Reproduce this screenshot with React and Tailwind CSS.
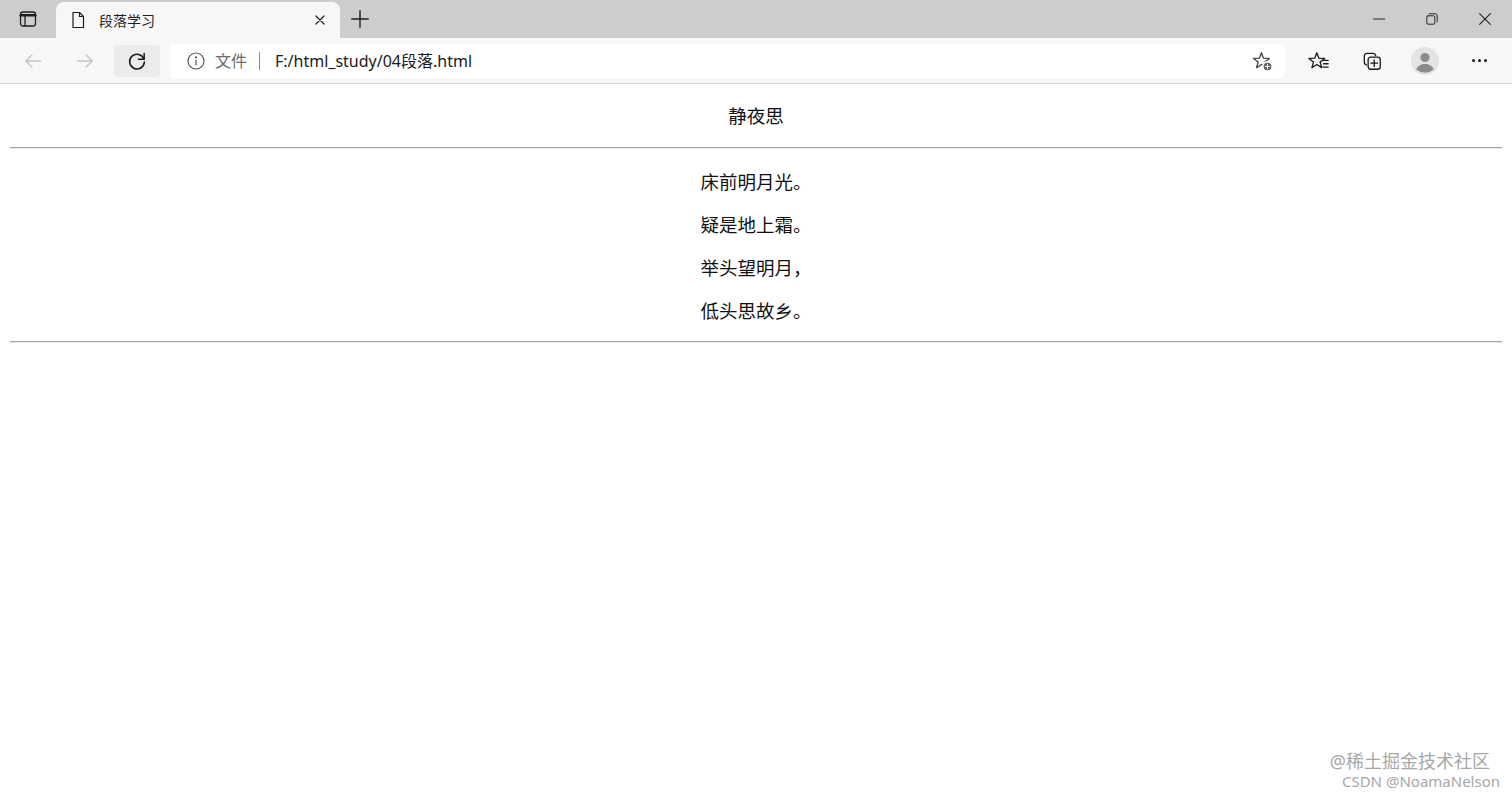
import React from 'react'

const font = { fontFamily: '"Noto Sans", "Noto Sans CJK SC", sans-serif' }

const Ico = ({ children, className = '', size = 20 }) => (
    <svg width={size} height={size} viewBox="0 0 20 20" fill="none" stroke="currentColor" strokeWidth="1.2" strokeLinecap="round" strokeLinejoin="round" className={className}>
        {children}
    </svg>
)

const star = 'M9.5 2.5L11.38 7.41L16.63 7.68L12.54 10.99L13.91 16.07L9.5 13.2L5.09 16.07L6.46 10.99L2.37 7.68L7.62 7.41Z'

const TabStrip = () => (
    <div className="h-[38px] bg-[#cdcdcd] flex items-end relative">
        <div className="w-[56px] h-[38px] flex items-center justify-center text-[#1f1f1f]">
            <Ico size={20}>
                <rect x="2.5" y="3" width="15" height="14" rx="2.5" strokeWidth="1.3" />
                <path d="M2.8 6.2h14.4" strokeWidth="2.6" />
                <path d="M7 6.5v10.3" strokeWidth="1.3" />
            </Ico>
        </div>
        <div className="w-[284px] h-[36px] bg-[#f7f7f7] rounded-t-[8px] flex items-center pl-[12px] pr-[12px]">
            <Ico size={20} className="text-[#1f1f1f]">
                <path d="M5 2.5h6.5l4 4v11h-10.5z" />
                <path d="M11.5 2.5v4h4" />
            </Ico>
            <span className="ml-[11px] text-[14px] text-[#1f1f1f] flex-1">段落学习</span>
            <Ico size={16} className="text-[#1f1f1f]">
                <path d="M5 5l10 10M15 5L5 15" strokeWidth="1.5" />
            </Ico>
        </div>
        <div className="w-[40px] h-[38px] flex items-center justify-center text-[#1f1f1f]">
            <Ico size={22}>
                <path d="M10 2.5v15M2.5 10h15" strokeWidth="1.3" />
            </Ico>
        </div>
        <div className="flex-1" />
        <div className="flex h-[38px] text-[#1f1f1f]">
            <div className="w-[53px] flex items-center justify-center">
                <Ico size={16}><path d="M3 10h14" /></Ico>
            </div>
            <div className="w-[53px] flex items-center justify-center">
                <Ico size={16}>
                    <rect x="3.5" y="6" width="10" height="10.5" rx="1.5" />
                    <path d="M6.5 3.5h7.5a2.5 2.5 0 0 1 2.5 2.5v7.5" />
                </Ico>
            </div>
            <div className="w-[54px] flex items-center justify-center">
                <Ico size={18}><path d="M4 4l12 12M16 4L4 16" /></Ico>
            </div>
        </div>
    </div>
)

const Toolbar = () => (
    <div className="h-[46px] bg-[#f7f7f7] border-b border-[#d2d2d2] flex items-center pl-[10px] pr-[8px]">
        <div className="w-[46px] h-[32px] flex items-center justify-center text-[#c4c4c4]">
            <Ico size={22}><path d="M17 10H3.5M9 4.5L3.5 10 9 15.5" /></Ico>
        </div>
        <div className="w-[6px]" />
        <div className="w-[46px] h-[32px] flex items-center justify-center text-[#c4c4c4]">
            <Ico size={22}><path d="M3 10h13.5M11 4.5l5.5 5.5-5.5 5.5" /></Ico>
        </div>
        <div className="w-[6px]" />
        <div className="w-[46px] h-[32px] rounded-[4px] bg-[#ebebeb] flex items-center justify-center text-[#1a1a1a]">
            <Ico size={22}>
                <path d="M16.3 8.2A6.7 6.7 0 1 0 16.7 11" strokeWidth="1.4" />
                <path d="M16.5 3.3v5.2h-5.2" strokeWidth="1.4" />
            </Ico>
        </div>
        <div className="w-[10px]" />
        <div className="flex-1 h-[34px] bg-white rounded-[4px] flex items-center pl-[16px] pr-[12px]">
            <Ico size={20} className="text-[#555]">
                <circle cx="10" cy="10" r="8" />
                <path d="M10 9v5" />
                <circle cx="10" cy="6.3" r="0.5" fill="currentColor" />
            </Ico>
            <span className="ml-[9px] text-[16px] text-[#6b6b6b]">文件</span>
            <span className="ml-[12px] w-px h-[18px] bg-[#8a8a8a]" />
            <span className="ml-[15px] text-[16px] text-[#1a1a1a]">F:/html_study/04段落.html</span>
            <div className="flex-1" />
            <Ico size={22} className="text-[#444]">
                <path d={star} />
                <circle cx="15" cy="15" r="4.2" fill="#5a5a5a" stroke="#fff" strokeWidth="1.4" />
                <path d="M15 13.1v3.8M13.1 15h3.8" stroke="#fff" strokeWidth="1.1" />
            </Ico>
        </div>
        <div className="w-[9px]" />
        <div className="w-[50px] h-[32px] flex items-center justify-center text-[#1a1a1a]">
            <Ico size={22}>
                <path d={star} transform="translate(-1.5 0)" />
                <path d="M13.8 9.5h4.5M14.2 12.5h4.1M13.8 15.5h4.5" />
            </Ico>
        </div>
        <div className="w-[3px]" />
        <div className="w-[50px] h-[32px] flex items-center justify-center text-[#1a1a1a]">
            <Ico size={22}>
                <path d="M5 13.5A2.5 2.5 0 0 1 3 11V5.5A2.5 2.5 0 0 1 5.5 3H11a2.5 2.5 0 0 1 2.4 2" />
                <rect x="6.5" y="6.5" width="11" height="11" rx="2.2" />
                <path d="M12 9v6M9 12h6" />
            </Ico>
        </div>
        <div className="w-[3px]" />
        <div className="w-[50px] h-[32px] flex items-center justify-center">
            <svg width="28" height="28" viewBox="0 0 28 28">
                <circle cx="14" cy="14" r="14" fill="#e3e3e3" />
                <circle cx="14" cy="10.5" r="4.6" fill="#8c8c8c" />
                <path d="M5.2 22.5c1.4-3.6 5-5.5 8.8-5.5s7.4 1.9 8.8 5.5A13.9 13.9 0 0 1 5.2 22.5z" fill="#8c8c8c" />
            </svg>
        </div>
        <div className="w-[4px]" />
        <div className="w-[50px] h-[32px] flex items-center justify-center gap-[3px]">
            <span className="w-[3px] h-[3px] rounded-full bg-[#1a1a1a]" />
            <span className="w-[3px] h-[3px] rounded-full bg-[#1a1a1a]" />
            <span className="w-[3px] h-[3px] rounded-full bg-[#1a1a1a]" />
        </div>
    </div>
)

const lines = ['床前明月光。', '疑是地上霜。', '举头望明月，', '低头思故乡。']

const Hr = () => <div className="mx-[10px] border-t border-[#a3a3a3] border-b border-b-[#ececec]" />

const App = () => {
    return (
        <div className="w-[1512px] h-[795px] bg-white overflow-hidden relative" style={font}>
            <TabStrip />
            <Toolbar />
            <div className="text-[18.5px] text-[#111]">
                <div className="h-[63px] flex items-center justify-center">静夜思</div>
                <Hr />
                <div className="pt-[11px]">
                    {lines.map(l => (
                        <div key={l} className="h-[43px] flex items-center justify-center">{l}</div>
                    ))}
                </div>
                <div className="mt-[9px]">
                    <Hr />
                </div>
            </div>
            <div className="absolute right-[12px] bottom-[4px] text-right leading-tight text-[#a8a8a8]">
                <div className="text-[18px] pr-[10px]">@稀土掘金技术社区</div>
                <div className="text-[15px]">CSDN @NoamaNelson</div>
            </div>
        </div>
    )
}

export default App
